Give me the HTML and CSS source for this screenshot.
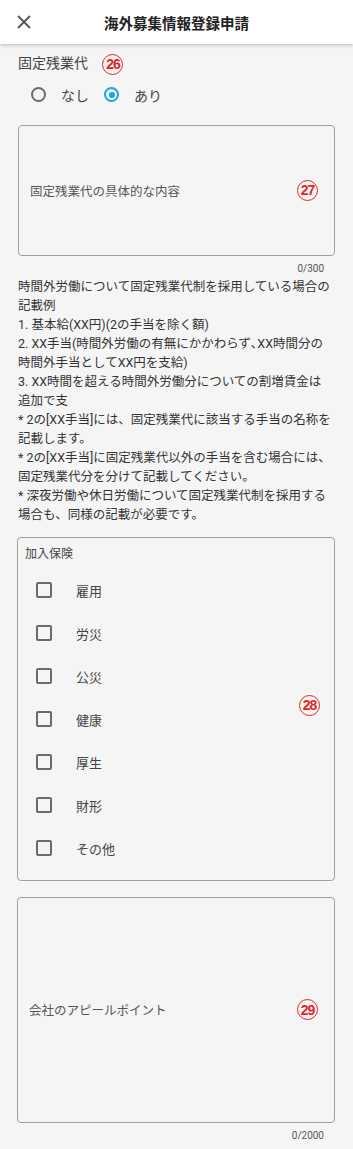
FILE: index.html
```html
<!DOCTYPE html>
<html lang="ja">
  <head>
    <meta charset="UTF-8" />
    <meta name="viewport" content="width=device-width, initial-scale=1.0" />
    <title>海外募集情報登録申請</title>
    <link rel="stylesheet" href="styles.css">
  </head>
  <body>
    <header class="app-bar">
      <button class="close-btn" aria-label="閉じる">
        <svg width="14" height="14" viewBox="0 0 14 14">
          <path d="M1 1 L13 13 M13 1 L1 13" stroke="#555" stroke-width="1.8" fill="none" />
        </svg>
      </button>
      <h1 class="app-title">海外募集情報登録申請</h1>
    </header>

    <main class="form">
      <!-- Fixed overtime pay -->
      <div class="field-label">固定残業代 <span class="marker marker-inline">26</span></div>
      <div class="radio-row">
        <label class="radio"><span class="radio-dot"></span>なし</label>
        <label class="radio checked"><span class="radio-dot"></span>あり</label>
      </div>

      <div class="text-box box-small">
        <span class="placeholder">固定残業代の具体的な内容</span>
        <span class="marker marker-box">27</span>
      </div>
      <div class="counter">0/300</div>

      <div class="note">
        時間外労働について固定残業代制を採用している場合の記載例<br>
        1. 基本給(XX円)(2の手当を除く額)<br>
        2. XX手当(時間外労働の有無にかかわらず､XX時間分の時間外手当としてXX円を支給)<br>
        3. XX時間を超える時間外労働分についての割増賃金は追加で支<br>
        * 2の[XX手当]には、固定残業代に該当する手当の名称を記載します。<br>
        * 2の[XX手当]に固定残業代以外の手当を含む場合には、固定残業代分を分けて記載してください。<br>
        * 深夜労働や休日労働について固定残業代制を採用する場合も、同様の記載が必要です。
      </div>

      <!-- Insurance -->
      <fieldset class="check-group">
        <div class="group-label">加入保険</div>
        <label class="check"><span class="check-box"></span>雇用</label>
        <label class="check"><span class="check-box"></span>労災</label>
        <label class="check"><span class="check-box"></span>公災</label>
        <label class="check"><span class="check-box"></span>健康</label>
        <label class="check"><span class="check-box"></span>厚生</label>
        <label class="check"><span class="check-box"></span>財形</label>
        <label class="check"><span class="check-box"></span>その他</label>
        <span class="marker marker-group">28</span>
      </fieldset>

      <div class="text-box box-large">
        <span class="placeholder">会社のアピールポイント</span>
        <span class="marker marker-box">29</span>
      </div>
      <div class="counter">0/2000</div>
    </main>
  </body>
</html>
```

FILE: styles.css
```css
/* Basic Reset */
* {
  margin: 0;
  padding: 0;
  box-sizing: border-box;
}

body {
  font-family: Roboto, "Noto Sans CJK JP", sans-serif;
  background-color: #f5f5f5;
  color: #333;
  width: 353px;
  min-height: 1149px;
}

/* App Bar */
.app-bar {
  height: 44px;
  background: #ffffff;
  box-shadow: 0 1px 4px rgba(0, 0, 0, 0.25);
  display: flex;
  align-items: center;
  position: relative;
}

.close-btn {
  border: none;
  background: none;
  width: 48px;
  height: 44px;
  display: flex;
  align-items: center;
  justify-content: center;
}

.app-title {
  position: absolute;
  left: 0;
  right: 0;
  text-align: center;
  font-size: 14.5px;
  font-weight: bold;
  color: #222;
  pointer-events: none;
}

.form {
  padding: 9px 18px 0 17px;
}

.field-label {
  font-size: 14px;
  line-height: 20px;
  color: #444;
  padding-left: 1px;
}

/* Annotation markers */
.marker {
  display: inline-flex;
  align-items: center;
  justify-content: center;
  width: 21px;
  height: 21px;
  border: 1px solid #e02525;
  border-radius: 50%;
  color: #e02525;
  font-size: 14px;
  font-weight: bold;
  letter-spacing: -1px;
  line-height: 1;
  font-family: "Liberation Sans Narrow", "Liberation Sans", sans-serif;
}

.marker-inline {
  margin-left: 11px;
  vertical-align: -1px;
}

/* Radios */
.radio-row {
  display: flex;
  height: 24px;
  align-items: center;
  margin-top: 8px;
  padding-left: 14px;
}

.radio {
  display: flex;
  align-items: center;
  font-size: 14px;
  color: #444;
  margin-right: 15px;
}

.radio-dot {
  width: 15px;
  height: 15px;
  border: 2px solid #6b6b6b;
  border-radius: 50%;
  margin-right: 15px;
  position: relative;
}

.radio.checked .radio-dot {
  border-color: #1ba3e3;
}

.radio.checked .radio-dot::after {
  content: "";
  position: absolute;
  top: 2.5px;
  left: 2.5px;
  width: 6px;
  height: 6px;
  border-radius: 50%;
  background: #1ba3e3;
}

/* Text boxes */
.text-box {
  border: 1px solid #a0a0a0;
  border-radius: 4px;
  display: flex;
  align-items: center;
  justify-content: space-between;
  padding: 0 16px 0 11px;
  background: #f5f5f5;
}

.box-small {
  height: 131px;
  margin-top: 18px;
  margin-left: 1px;
}

.box-large {
  height: 226px;
  margin-top: 16px;
}

.placeholder {
  font-size: 12.5px;
  color: #555;
}

.counter {
  text-align: right;
  font-size: 10px;
  color: #555;
  line-height: 14px;
  margin-top: 6px;
  padding-right: 11px;
}

.note {
  font-size: 12.5px;
  line-height: 19px;
  color: #333;
  margin-top: 1px;
  padding-left: 1px;
  width: 315px;
}

/* Checkbox group */
.check-group {
  border: 1px solid #a0a0a0;
  border-radius: 4px;
  margin-top: 13px;
  padding: 7px 0 8px 7px;
  position: relative;
  height: 344px;
}

.group-label {
  font-size: 12px;
  line-height: 18px;
  color: #444;
  margin-bottom: 6px;
}

.check {
  display: flex;
  align-items: center;
  height: 43px;
  font-size: 13px;
  color: #444;
  padding-left: 11px;
}

.check-box {
  width: 16px;
  height: 16px;
  border: 2px solid #6b6b6b;
  border-radius: 2px;
  margin-right: 24px;
}

.marker-group {
  position: absolute;
  right: 14px;
  top: 157px;
}
```
